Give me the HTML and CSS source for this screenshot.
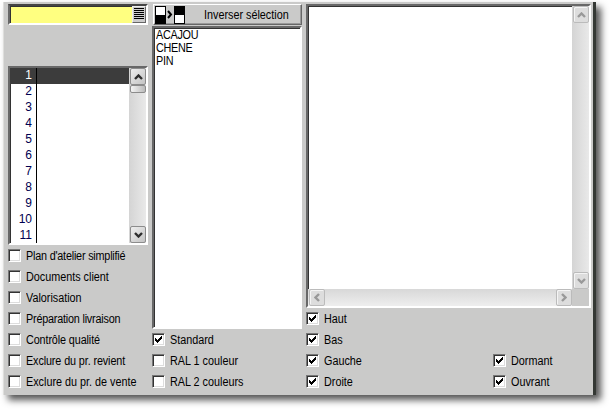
FILE: index.html
```html
<!DOCTYPE html>
<html lang="fr">
<head>
<meta charset="utf-8">
<title>Options</title>
<link rel="stylesheet" href="styles.css">
</head>
<body>
<svg class="defs" width="0" height="0" aria-hidden="true">
  <symbol id="up" viewBox="0 0 9 6"><path d="M1 5 4.5 1.5 8 5"/></symbol>
  <symbol id="down" viewBox="0 0 9 6"><path d="M1 1 4.5 4.5 8 1"/></symbol>
  <symbol id="left" viewBox="0 0 6 9"><path d="M5 1 1.5 4.5 5 8"/></symbol>
  <symbol id="right" viewBox="0 0 6 9"><path d="M1 1 4.5 4.5 1 8"/></symbol>
  <symbol id="check" viewBox="0 0 7 7"><path d="M0 2h1v1h1v1h1v-1h1v-1h1v-1h1v-1h1v3h-1v1h-1v1h-1v1h-1v1h-1v-1h-1v-1h-1z"/></symbol>
</svg>
<main class="panel">
  <section class="col-a">
    <div class="combo sunken">
      <div class="combo-value"></div>
      <button class="combo-btn" aria-label="Liste"><svg width="10" height="13"><path d="M0 .5h10M0 2.5h10M0 4.5h10M0 6.5h10M0 8.5h10M0 10.5h10" stroke="#000"/></svg></button>
    </div>
    <div class="grid sunken">
      <ol class="rows">
        <li class="selected"><span>1</span></li><li><span>2</span></li><li><span>3</span></li><li><span>4</span></li><li><span>5</span></li><li><span>6</span></li><li><span>7</span></li><li><span>8</span></li><li><span>9</span></li><li><span>10</span></li><li><span>11</span></li>
      </ol>
      <div class="vbar">
        <button class="arrow"><svg width="9" height="6"><use href="#up"/></svg></button>
        <div class="thumb"></div>
        <button class="arrow end"><svg width="9" height="6"><use href="#down"/></svg></button>
      </div>
    </div>
    <div class="checks">
      <label><i class="box"></i><span class="tight">Plan d'atelier simplifié</span></label>
      <label><i class="box"></i><span>Documents client</span></label>
      <label><i class="box"></i><span>Valorisation</span></label>
      <label><i class="box"></i><span class="tight">Préparation livraison</span></label>
      <label><i class="box"></i><span class="snug">Contrôle qualité</span></label>
      <label><i class="box"></i><span class="snug">Exclure du pr. revient</span></label>
      <label><i class="box"></i><span>Exclure du pr. de vente</span></label>
    </div>
  </section>
  <section class="col-b">
    <button class="invert">
      <svg width="32" height="18"><path d="M0 0h11v18H0zM19 0h11v18H19z"/><path d="M1 1h9v8H1zM20 9h9v8h-9z" fill="#fff"/><path d="M13 5l3 3.5-3 3.5" fill="none" stroke="#000" stroke-width="2"/></svg>
      <span>Inverser sélection</span>
    </button>
    <ul class="woods sunken"><li>ACAJOU</li><li>CHENE</li><li>PIN</li></ul>
    <div class="checks">
      <label><i class="box"><svg width="7" height="7"><use href="#check"/></svg></i><span>Standard</span></label>
      <label><i class="box"></i><span>RAL 1 couleur</span></label>
      <label><i class="box"></i><span>RAL 2 couleurs</span></label>
    </div>
  </section>
  <section class="col-c">
    <div class="view sunken">
      <div class="canvas"></div>
      <div class="vbar off">
        <button class="arrow"><svg width="9" height="6"><use href="#up"/></svg></button>
        <button class="arrow end"><svg width="9" height="6"><use href="#down"/></svg></button>
      </div>
      <div class="hbar off">
        <button class="arrow"><svg width="6" height="9"><use href="#left"/></svg></button>
        <button class="arrow"><svg width="6" height="9"><use href="#right"/></svg></button>
      </div>
      <div class="corner"></div>
    </div>
    <div class="sides">
      <div class="checks">
        <label><i class="box"><svg width="7" height="7"><use href="#check"/></svg></i><span>Haut</span></label>
        <label><i class="box"><svg width="7" height="7"><use href="#check"/></svg></i><span>Bas</span></label>
        <label><i class="box"><svg width="7" height="7"><use href="#check"/></svg></i><span>Gauche</span></label>
        <label><i class="box"><svg width="7" height="7"><use href="#check"/></svg></i><span>Droite</span></label>
      </div>
      <div class="checks">
        <label><i class="box"><svg width="7" height="7"><use href="#check"/></svg></i><span>Dormant</span></label>
        <label><i class="box"><svg width="7" height="7"><use href="#check"/></svg></i><span>Ouvrant</span></label>
      </div>
    </div>
  </section>
</main>
</body>
</html>
```
FILE: styles.css
```css
* { box-sizing: border-box; }
body { margin: 0; width: 610px; height: 409px; overflow: hidden; background: #fff; font: 12px/13px "Liberation Sans", Arial, sans-serif; color: #000; }
.defs { position: absolute; }
ol, ul { margin: 0; padding: 0; list-style: none; }
button { margin: 0; padding: 0; font: inherit; color: inherit; border: 0; }
svg { display: block; flex: none; }

.panel { display: grid; grid-template-columns: 140px 150px 285px; column-gap: 4px; width: 593px; height: 393px; margin: 2px 0 0 3px; padding: 2px 0 0 4px; background: #cacac9; border-left: 1px solid #dededc; border-right: 3px solid #343834; box-shadow: 5px 5px 7px #555; }
.sunken { border: 2px solid; border-color: #686868 #fff #fff #686868; box-shadow: inset 1px 1px #333; }

.combo { display: flex; height: 21px; background: #ffff80; border-top-color: #444; }
.combo-value { flex: 1; }
.combo-btn { display: flex; justify-content: center; width: 14px; height: 17px; padding-top: 1px; background: #ccc; border: 1px solid; border-color: #eee #666 #666 #eee; }

.grid { display: flex; height: 179px; margin-top: 41px; background: #fff; overflow: hidden; }
.rows { flex: 1; }
.rows li { height: 16px; line-height: 15px; color: #000050; }
.rows span { display: block; width: 27px; height: 16px; padding-right: 4px; text-align: right; border-right: 1px solid #000; }
.rows .selected { background: #3c3c3c; color: #fff; }
.vbar { display: flex; flex-direction: column; width: 17px; height: 175px; background: linear-gradient(90deg, #d4d4d4, #e9e9e9); }
.arrow { display: flex; align-items: center; justify-content: center; flex: none; width: 16px; height: 17px; margin-left: 1px; background: linear-gradient(135deg, #eee, #c4c4c4); border: 1px solid #8c8c8c; border-radius: 2px; }
.arrow svg { fill: none; stroke: #2d2d2d; stroke-width: 2.4; }
.thumb { height: 8px; margin-left: 1px; background: linear-gradient(90deg, #f4f4f4, #bbb); border: 1px solid #8c8c8c; border-radius: 2px; }
.end { margin-top: auto; }

.checks { display: flex; flex-direction: column; gap: 8px; margin-top: 4px; }
.checks label { display: flex; gap: 5px; height: 13px; white-space: nowrap; }
.box { width: 13px; height: 13px; padding: 3px; flex: none; background: #fff; border: 1px solid; border-color: #777 #fff #fff #777; box-shadow: inset 1px 1px #333, inset -1px -1px #ddd; }
.box svg { margin: -1px 0 0 -1px; }
.checks span, .invert span, .woods li { transform: scaleX(.9); transform-origin: left; }
.checks span { line-height: 14px; }
.checks .tight { letter-spacing: -.22px; }
.checks .snug { letter-spacing: -.12px; }

.invert { display: flex; align-items: center; width: 149px; height: 21px; margin-left: 1px; padding-left: 1px; background: #cacac9; border: 1px solid; border-color: #fff #666 #666 #fff; box-shadow: inset -1px -1px #999; }
.invert span { margin-left: 17px; padding-top: 2px; white-space: nowrap; }
.woods { height: 303px; margin-top: 1px; padding: 1px 2px 0; background: #fff; letter-spacing: -.3px; }

.view { display: grid; grid-template-columns: 264px 17px; grid-template-rows: 283px 17px; height: 304px; background: #fff; }
.view .vbar { height: 283px; }
.hbar { display: flex; justify-content: space-between; background: linear-gradient(#d8d8d8, #eee); }
.off .arrow { background: #ddd; border-color: #bbb; box-shadow: inset 1px 1px #f4f4f4; }
.off .arrow svg { stroke: #999; }
.corner { background: #cacac9; }
.sides { display: grid; grid-template-columns: 187px auto; align-items: end; }
```
